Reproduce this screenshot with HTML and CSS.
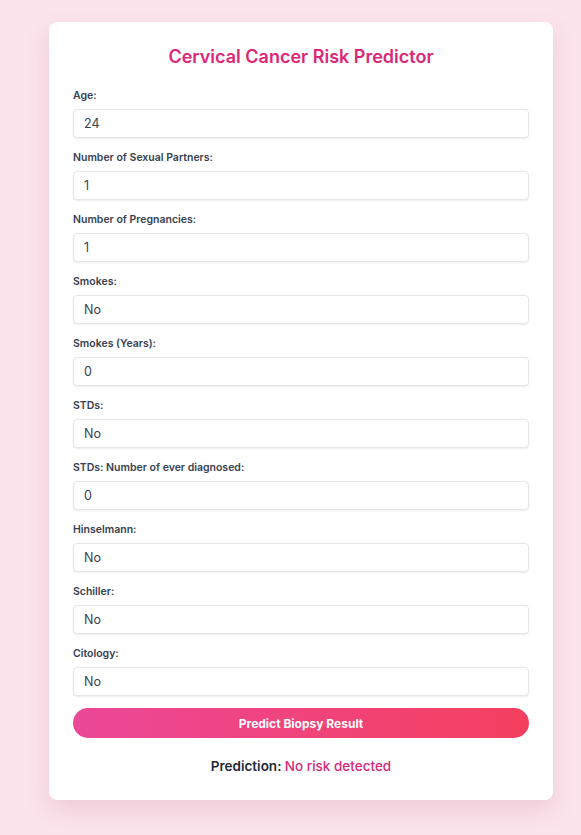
FILE: index.html
```html
<!DOCTYPE html>
<html lang="en">
<head>
<meta charset="utf-8">
<title>Cervical Cancer Risk Predictor</title>
<link rel="stylesheet" href="styles.css">
</head>
<body>
<div class="page">
  <form class="card">
    <h2 class="title">Cervical Cancer Risk Predictor</h2>
    <div class="field"><label class="label">Age:</label><input class="input" type="text" value="24"></div>
    <div class="field"><label class="label">Number of Sexual Partners:</label><input class="input" type="text" value="1"></div>
    <div class="field"><label class="label">Number of Pregnancies:</label><input class="input" type="text" value="1"></div>
    <div class="field"><label class="label">Smokes:</label><input class="input" type="text" value="No"></div>
    <div class="field"><label class="label">Smokes (Years):</label><input class="input" type="text" value="0"></div>
    <div class="field"><label class="label">STDs:</label><input class="input" type="text" value="No"></div>
    <div class="field"><label class="label">STDs: Number of ever diagnosed:</label><input class="input" type="text" value="0"></div>
    <div class="field"><label class="label">Hinselmann:</label><input class="input" type="text" value="No"></div>
    <div class="field"><label class="label">Schiller:</label><input class="input" type="text" value="No"></div>
    <div class="field field-last"><label class="label">Citology:</label><input class="input" type="text" value="No"></div>
    <button class="button" type="button">Predict Biopsy Result</button>
    <p class="result">Prediction: <span class="result-value">No risk detected</span></p>
  </form>
</div>
</body>
</html>
```
FILE: styles.css
```css
* { box-sizing: border-box; }
html, body { margin: 0; padding: 0; }
body {
  background: #fce4ec;
  font-family: Inter, "Noto Sans", sans-serif;
  min-height: 835px;
}
.page {
  padding: 22px 28px 30px 49px;
}
.card {
  width: 504px;
  background: #ffffff;
  border-radius: 8px;
  padding: 23px 24px 24px 24px;
  box-shadow: 0 10px 25px rgba(150, 60, 90, 0.15);
  display: flex;
  flex-direction: column;
}
.title {
  margin: 0 0 20px 0;
  font-size: 18px;
  line-height: 24px;
  font-weight: 600;
  color: #db2777;
  text-align: center;
}
.field {
  display: flex;
  flex-direction: column;
  margin-bottom: 13px;
}
.field-last {
  margin-bottom: 12px;
}
.label {
  font-size: 10.5px;
  line-height: 14px;
  font-weight: 600;
  color: #374151;
  margin-bottom: 6px;
}
.input {
  height: 29px;
  width: 100%;
  border: 1px solid #e5e7eb;
  border-radius: 4px;
  padding: 0 10px;
  font-family: inherit;
  font-size: 12.5px;
  color: #374151;
  background: #fff;
  box-shadow: 0 1px 2px rgba(0, 0, 0, 0.08);
  outline: none;
}
.button {
  height: 30px;
  border: none;
  border-radius: 15px;
  background: linear-gradient(90deg, #ec4899, #f43f5e);
  color: #fff;
  font-family: inherit;
  font-size: 12px;
  font-weight: 700;
  cursor: pointer;
}
.result {
  margin: 18px 0 0 0;
  text-align: center;
  font-size: 13.5px;
  line-height: 20px;
  font-weight: 600;
  color: #1f2937;
}
.result-value {
  color: #db2777;
  font-weight: 500;
}
```
